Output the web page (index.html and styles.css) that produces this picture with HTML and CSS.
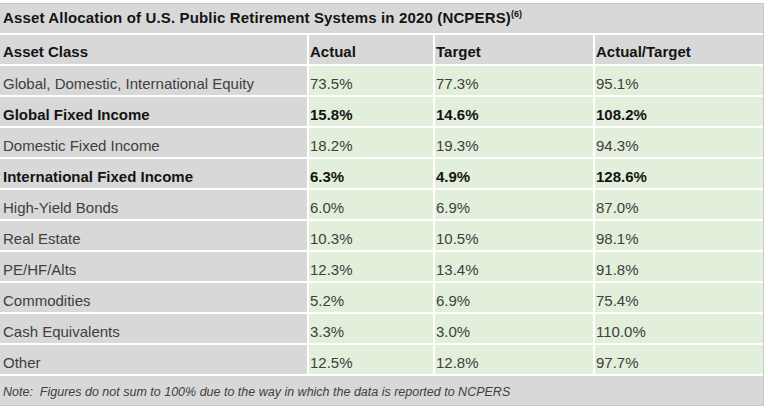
FILE: index.html
```html
<!DOCTYPE html>
<html lang="en">
<head>
<meta charset="utf-8">
<title>Asset Allocation</title>
<link rel="stylesheet" href="styles.css">
</head>
<body>
<div class="frame">
  <div class="grid" role="table">
    <div class="cell title span">Asset Allocation of U.S. Public Retirement Systems in 2020 (NCPERS)<sup>(6)</sup></div>

    <div class="cell head first">Asset Class</div>
    <div class="cell head">Actual</div>
    <div class="cell head">Target</div>
    <div class="cell head">Actual/Target</div>

    <div class="cell name">Global, Domestic, International Equity</div>
    <div class="cell val">73.5%</div><div class="cell val">77.3%</div><div class="cell val">95.1%</div>

    <div class="cell name bold">Global Fixed Income</div>
    <div class="cell val bold">15.8%</div><div class="cell val bold">14.6%</div><div class="cell val bold">108.2%</div>

    <div class="cell name">Domestic Fixed Income</div>
    <div class="cell val">18.2%</div><div class="cell val">19.3%</div><div class="cell val">94.3%</div>

    <div class="cell name bold">International Fixed Income</div>
    <div class="cell val bold">6.3%</div><div class="cell val bold">4.9%</div><div class="cell val bold">128.6%</div>

    <div class="cell name">High-Yield Bonds</div>
    <div class="cell val">6.0%</div><div class="cell val">6.9%</div><div class="cell val">87.0%</div>

    <div class="cell name">Real Estate</div>
    <div class="cell val">10.3%</div><div class="cell val">10.5%</div><div class="cell val">98.1%</div>

    <div class="cell name">PE/HF/Alts</div>
    <div class="cell val">12.3%</div><div class="cell val">13.4%</div><div class="cell val">91.8%</div>

    <div class="cell name">Commodities</div>
    <div class="cell val">5.2%</div><div class="cell val">6.9%</div><div class="cell val">75.4%</div>

    <div class="cell name">Cash Equivalents</div>
    <div class="cell val">3.3%</div><div class="cell val">3.0%</div><div class="cell val">110.0%</div>

    <div class="cell name">Other</div>
    <div class="cell val">12.5%</div><div class="cell val">12.8%</div><div class="cell val">97.7%</div>

    <div class="cell note span">Note:&nbsp; Figures do not sum to 100% due to the way in which the data is reported to NCPERS</div>
  </div>
</div>
</body>
</html>
```

FILE: styles.css
```css
html, body {
  margin: 0;
  padding: 0;
  background: #ffffff;
}

body {
  font-family: "Liberation Sans", Arial, sans-serif;
  font-size: 15px;
  color: #404040;
}

.frame {
  margin-top: 3px;
  width: 763px;
  border-top: 1px solid #c6c6c6;
  border-right: 1px solid #c6c6c6;
  border-bottom: 1px solid #c6c6c6;
  background: #ffffff;
}

.grid {
  display: grid;
  grid-template-columns: 307px 124px 158px 168px;
  grid-auto-rows: 29px;
  gap: 2px;
}

.cell {
  box-sizing: border-box;
  line-height: 16px;
  padding: 10px 0 0 1px;
  white-space: nowrap;
  overflow: hidden;
}

.span {
  grid-column: 1 / -1;
}

.title {
  background: #d8d8d8;
  color: #141414;
  font-weight: bold;
  letter-spacing: 0.15px;
  padding-top: 6px;
  padding-left: 3px;
}

.title sup {
  font-size: 9px;
  line-height: 0;
  letter-spacing: 0;
  vertical-align: 6px;
}

.head {
  background: #d8d8d8;
  color: #141414;
  font-weight: bold;
  padding-top: 9px;
}

.first,
.name {
  padding-left: 3px;
}

.name {
  background: #d8d8d8;
}

.val {
  background: #e2efda;
}

.bold {
  font-weight: bold;
  color: #141414;
}

.note {
  background: #d8d8d8;
  font-style: italic;
  font-size: 12.5px;
  line-height: 14px;
  padding-top: 9px;
  padding-left: 3px;
  color: #404040;
}
```
